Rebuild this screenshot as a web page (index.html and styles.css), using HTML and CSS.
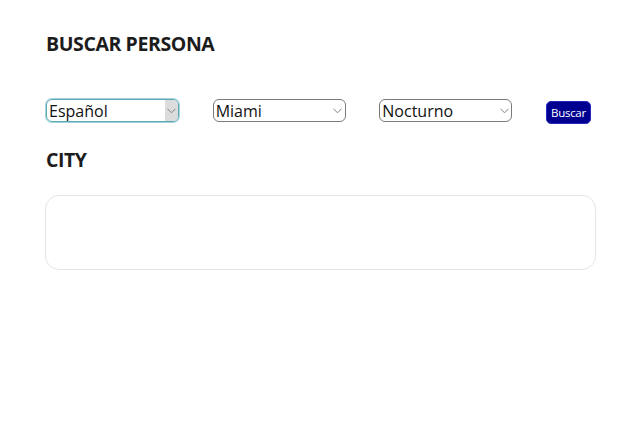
FILE: index.html
```html
<!DOCTYPE html>
<html lang="es">
<head>
<meta charset="utf-8">
<title>Buscar persona</title>
<link rel="stylesheet" href="styles.css">
</head>
<body>
<main class="page">
  <h1 class="title">BUSCAR PERSONA</h1>
  <form class="filters">
    <div class="select select-focus">
      <span class="select-value">Español</span>
      <span class="select-arrow"><svg width="9" height="6" viewBox="0 0 9 6"><path d="M0.5 0.8 L4.5 4.8 L8.5 0.8" fill="none" stroke="#808080" stroke-width="1"/></svg></span>
    </div>
    <div class="select">
      <span class="select-value">Miami</span>
      <span class="select-arrow"><svg width="9" height="6" viewBox="0 0 9 6"><path d="M0.5 0.8 L4.5 4.8 L8.5 0.8" fill="none" stroke="#808080" stroke-width="1"/></svg></span>
    </div>
    <div class="select">
      <span class="select-value">Nocturno</span>
      <span class="select-arrow"><svg width="9" height="6" viewBox="0 0 9 6"><path d="M0.5 0.8 L4.5 4.8 L8.5 0.8" fill="none" stroke="#808080" stroke-width="1"/></svg></span>
    </div>
    <button type="button" class="btn">Buscar</button>
  </form>
  <h2 class="subtitle">CITY</h2>
  <div class="result-box"></div>
</main>
</body>
</html>
```
FILE: styles.css
```css
html, body {
  margin: 0;
  padding: 0;
  background: #ffffff;
}
body {
  font-family: "Open Sans", "Noto Sans", sans-serif;
  color: #1c1c1c;
}
.page {
  padding: 31px 0 0 46px;
  width: 550px;
}
.title {
  margin: 0;
  font-size: 19.5px;
  font-weight: 700;
  line-height: 26px;
  letter-spacing: -0.4px;
}
.filters {
  margin-top: 42px;
  display: flex;
  align-items: flex-start;
  justify-content: space-between;
  width: 545px;
}
.select {
  box-sizing: border-box;
  width: 133px;
  height: 23px;
  border: 1px solid #7a7a7a;
  border-radius: 6px;
  display: flex;
  align-items: center;
  justify-content: space-between;
  font-size: 16px;
  color: #111;
  overflow: hidden;
}
.select-value {
  padding-left: 2px;
  padding-top: 1px;
  line-height: 21px;
}
.select-arrow {
  width: 12px;
  height: 100%;
  display: flex;
  align-items: center;
  justify-content: center;
  margin-right: 1px;
}
.select-focus {
  border: 1px solid #5aa9b8;
  box-shadow: 0 0 0 1px #a8d2da;
}
.select-focus .select-arrow {
  background: #dcdcdc;
  margin-right: 0;
  width: 13px;
}
.btn {
  margin-top: 2px;
  box-sizing: border-box;
  width: 45px;
  height: 23px;
  border: 1px solid #2a2ac0;
  border-radius: 5px;
  background: #000090;
  color: #ffffff;
  font-family: "Open Sans", sans-serif;
  font-size: 11.5px;
  padding: 0;
  letter-spacing: -0.3px;
}
.subtitle {
  margin: 23px 0 0 0;
  font-size: 19.5px;
  font-weight: 700;
  line-height: 26px;
  letter-spacing: -0.5px;
}
.result-box {
  margin: 22px 0 0 -1px;
  box-sizing: border-box;
  width: 551px;
  height: 75px;
  border: 1px solid #e4e4e4;
  border-radius: 14px;
}
```
